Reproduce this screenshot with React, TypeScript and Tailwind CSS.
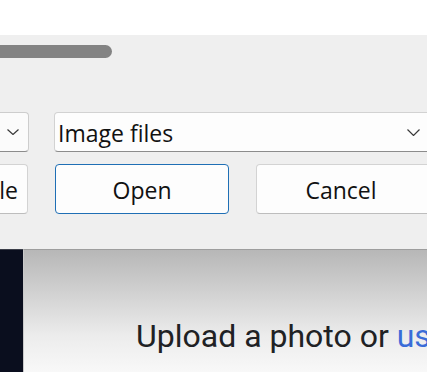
import React from "react";

const Chevron = ({ w, h }: { w: number; h: number }) => (
  <svg width={w} height={h} viewBox={`0 0 ${w} ${h}`} fill="none">
    <path
      d={`M0.5 0.5 L${w / 2} ${h - 0.5} L${w - 0.5} 0.5`}
      stroke="#3a3a3a"
      strokeWidth="1.2"
    />
  </svg>
);

export default function App() {
  return (
    <div
      className="w-[427px] h-[372px] overflow-hidden flex flex-col bg-white"
      style={{ fontFamily: '"Open Sans", "Noto Sans", sans-serif' }}
    >
      <div className="h-[35px] shrink-0 bg-white" />
      <div className="h-[214px] shrink-0 bg-[#efefef] flex flex-col overflow-hidden">
        <div className="mt-[10px] -ml-[30px] w-[142px] h-[13px] rounded-full bg-[#838383]" />
        <div className="mt-[54px] flex h-[40px] gap-[25px]">
          <div className="-ml-[30px] w-[59px] shrink-0 h-full rounded-[4px] border border-[#cdcdcd] border-b-[#8c8c8c] bg-[#fbfbfb] flex items-center justify-end pr-[9px]">
            <Chevron w={12} h={6} />
          </div>
          <div className="w-[383px] shrink-0 h-full rounded-[4px] border border-[#d2d2d2] border-b-[#8c8c8c] bg-[#fdfdfd] flex items-center pl-[3px] pr-[16px] justify-between">
            <span className="text-[23px] text-[#111] leading-none pt-[3px]">Image files</span>
            <Chevron w={13} h={7} />
          </div>
        </div>
        <div className="mt-[12px] flex h-[50px] gap-[27px]">
          <div className="-ml-[146px] w-[174px] shrink-0 h-full rounded-[4px] border border-[#d3d3d3] border-b-[#bdbdbd] bg-[#fdfdfd] flex items-center justify-end pr-[9px]">
            <span className="text-[23px] text-[#111] leading-none pt-[2px]">le</span>
          </div>
          <div className="w-[174px] shrink-0 h-full rounded-[4px] border border-[#1f6fb5] bg-[#fdfdfd] flex items-center justify-center">
            <span className="text-[23px] text-[#111] leading-none pt-[2px]">Open</span>
          </div>
          <div className="w-[174px] shrink-0 h-full rounded-[4px] border border-[#d3d3d3] border-b-[#bdbdbd] bg-[#fdfdfd] flex items-center justify-center pr-[4px]">
            <span className="text-[23px] text-[#111] leading-none pt-[2px]">Cancel</span>
          </div>
        </div>
      </div>
      <div className="flex-1 flex">
        <div className="w-[23px] shrink-0 bg-[#0a0e1e] border-t border-[#3a3d48]" />
        <div className="flex-1 border-t border-l border-t-[#9d9d9d] border-l-[#c9c9c9] bg-gradient-to-b from-[#b7b7b7] via-[#ececec] via-70% to-[#f8f8f8] overflow-hidden">
          <div
            className="mt-[70px] ml-[112px] whitespace-nowrap text-[32px] leading-none text-[#202124]"
            style={{ fontFamily: "Roboto, sans-serif" }}
          >
            Upload a photo or <span className="text-[#3a6cd8]">us</span>
          </div>
        </div>
      </div>
    </div>
  );
}
